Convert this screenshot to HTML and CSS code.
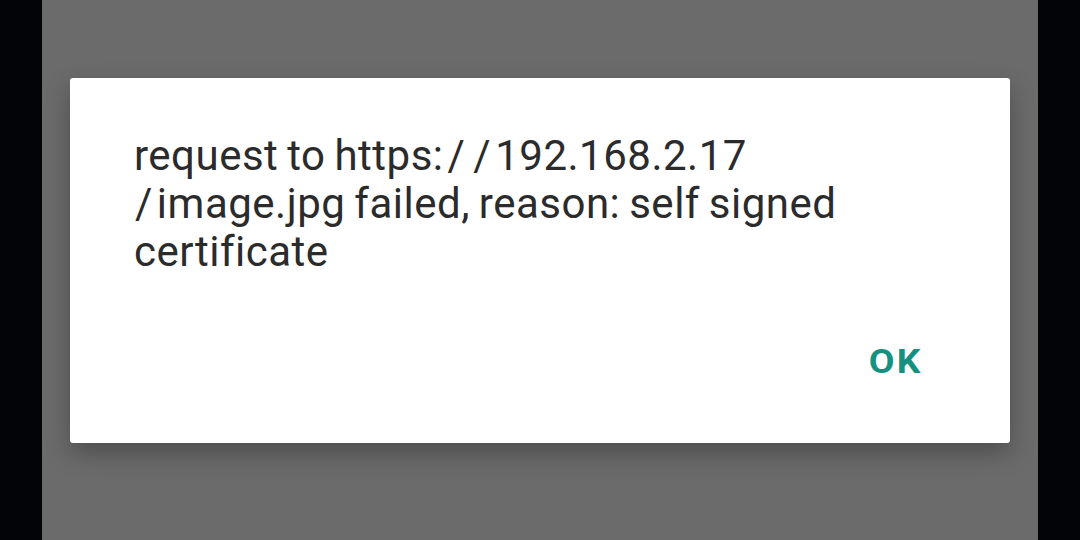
FILE: index.html
```html
<!DOCTYPE html>
<html>
<head>
<meta charset="utf-8">
<link rel="stylesheet" href="styles.css">
</head>
<body>
<div class="screen">
  <div class="bar"></div>
  <div class="scrim">
    <div class="dialog">
      <p class="message">request to https:<span class="sl">/</span><span class="sl">/</span>192.168.2.17<br><span class="sl sl-lead">/</span>image.jpg failed, reason: self signed<br>certificate</p>
      <div class="actions">
        <span class="btn">OK</span>
      </div>
    </div>
  </div>
  <div class="bar"></div>
</div>
</body>
</html>
```
FILE: styles.css
```css
html, body {
  margin: 0;
  padding: 0;
  width: 1080px;
  height: 540px;
  overflow: hidden;
  background: #020408;
}
.screen {
  display: flex;
  width: 1080px;
  height: 540px;
}
.bar {
  width: 42px;
  background: #020408;
}
.scrim {
  flex: 1;
  background: #6b6b6b;
  padding: 78px 28px 0 28px;
}
.dialog {
  width: 940px;
  height: 365px;
  background: #ffffff;
  border-radius: 3px;
  box-shadow: 0 10px 24px rgba(0,0,0,0.28);
  display: flex;
  flex-direction: column;
  box-sizing: border-box;
  padding: 0 89px 0 64px;
}
.message {
  margin: 0;
  padding-top: 54px;
  font-family: Roboto, "Noto Sans", sans-serif;
  font-size: 42px;
  line-height: 48px;
  letter-spacing: 0.5px;
  word-spacing: -2px;
  color: #2b2b2b;
  white-space: nowrap;
}
.sl {
  margin: 0 4px;
}
.sl-lead {
  margin-left: 1px;
}
.actions {
  display: flex;
  justify-content: flex-end;
  margin-top: 66px;
}
.btn {
  display: inline-block;
  font-family: Roboto, "Noto Sans", sans-serif;
  font-weight: 700;
  font-size: 33px;
  letter-spacing: 2px;
  margin-right: -2px;
  color: #16907f;
  line-height: 40px;
  transform: scaleX(1.13);
  transform-origin: right center;
}
```
